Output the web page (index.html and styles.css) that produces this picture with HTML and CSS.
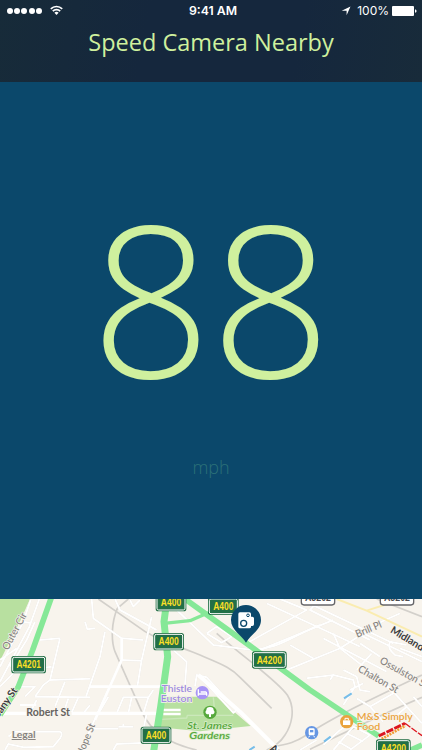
FILE: index.html
```html
<!doctype html>
<html lang="en">
  <head>
    <meta charset="UTF-8" />
    <meta name="viewport" content="width=device-width, initial-scale=1.0" />
    <title>Speed Camera Nearby</title>
    <link rel="stylesheet" href="styles.css">
  </head>
  <body>
    <div class="app">
      <header class="header">
        <div class="status-bar">
          <div class="status-left">
            <div class="signal"><i></i><i></i><i></i><i></i><i></i></div>
            <svg class="wifi" width="13" height="11" viewBox="0 0 13 11">
              <path d="M.8 3.9a8 8 0 0 1 11.4 0M2.8 6.1a5.2 5.2 0 0 1 7.4 0" fill="none" stroke="#fff" stroke-width="1.7" />
              <path d="M4.4 7.8a3 3 0 0 1 4.2 0L6.5 10z" fill="#fff" />
            </svg>
          </div>
          <div class="time">9:41 AM</div>
          <div class="status-right">
            <svg width="10" height="10" viewBox="0 0 10 10"><path d="M9.5 .5L5.6 9.2V4.8H.7z" fill="#fff" /></svg>
            <span class="percent">100%</span>
            <svg width="25" height="10" viewBox="0 0 25 10">
              <rect width="22" height="10" rx="1" fill="#fff" />
              <path d="M23 3.2q1.6.4 1.6 1.8T23 6.8z" fill="#fff" />
            </svg>
          </div>
        </div>
        <h1>Speed Camera Nearby</h1>
      </header>

      <main class="speed">
        <div class="value">88</div>
        <div class="unit">mph</div>
      </main>

      <svg class="map" viewBox="0 27 1266 453">
        <defs>
          <g id="shield">
            <rect x="-46" y="-26" width="92" height="52" rx="8" fill="#1f6b42" />
            <rect x="-42" y="-22" width="84" height="44" rx="5" fill="#226f47" stroke="#fff" stroke-width="3" />
          </g>
          <g id="shield-wide">
            <rect x="-52" y="-26" width="104" height="52" rx="8" fill="#1f6b42" />
            <rect x="-48" y="-22" width="96" height="44" rx="5" fill="#226f47" stroke="#fff" stroke-width="3" />
          </g>
        </defs>

        <!-- parks -->
        <path class="park" d="M0 27H90L62 90L0 212z" />
        <path class="park" d="M488 320H650L752 408L600 424L476 412z" />
        <path class="park-path" d="M484 388L560 384L562 376H700M640 322L645 376" />

        <!-- railways -->
        <g class="rail">
          <path d="M352 55C335 95 332 150 345 185C370 240 400 310 425 365C455 430 520 465 590 480" />
          <path d="M295 27L400 100C470 155 530 165 600 195C660 222 690 230 720 262L815 355" />
          <path d="M352 55L385 27" />
          <path d="M650 130C740 210 830 270 862 315C890 360 872 410 855 435C840 460 820 470 800 480" />
          <path d="M1266 255C1150 310 1000 380 920 435C880 460 860 462 830 468" />
          <path d="M1266 322C1130 380 1030 430 930 478" />
          <path d="M1130 27L1266 80" />
        </g>

        <!-- minor streets -->
        <g class="street thin">
          <path d="M92 30L70 95L0 230M118 27L88 110L0 275M70 95L95 100M0 210L50 175M105 95L80 150L30 230M0 290L45 245" />
          <path d="M120 150L180 145M180 145L150 270M118 235L155 230M75 320L105 290H60M105 320L130 285L150 270L270 266" />
          <path d="M105 320L270 322M195 275L165 350M205 325L190 370M60 345H110M110 330L90 368M235 322L215 368" />
          <path d="M255 95L262 118L285 115M275 27L280 85L365 145V210L270 420L245 480M315 125L300 200L258 320" />
          <path d="M345 27L360 60L470 120M365 145L430 150M365 210L425 212M390 30L400 50L420 30" />
          <path d="M455 80L425 210L412 290M350 370L370 322H445L430 370M395 322L385 370M445 322L460 300" />
          <path d="M270 345L250 370M325 320L290 380M355 410H400M370 402V412M282 416H355M440 372L425 440" />
          <path d="M25 440L45 425H180Q190 430 180 445L160 470L70 472L25 462L15 480M340 480L350 462L440 458" />
          <path d="M520 180L560 215L555 285M505 65L520 50L640 165L740 178C830 185 880 135 960 105" />
          <path d="M620 130L650 110L695 140L665 158L620 130M585 290L590 255L620 262L710 360L700 368L600 260" />
          <path d="M740 160L920 60L840 27M780 180L1000 90M800 40L1080 170M900 27L1180 160M960 27L930 60L1110 150" />
          <path d="M860 240L1020 175L1145 95L1200 70M1020 175L1130 260L1175 300L1220 350L1266 400" />
          <path d="M970 145L1160 245M1080 160L1140 200M1000 130L1020 175M940 205L870 165M1115 190L1070 240M1090 130L1266 215" />
          <path d="M920 265L1000 255L1060 270L1065 290L1030 345M1000 255L990 270M1030 240L1070 260L1080 300L1110 305M1050 300L1090 280" />
          <path d="M1170 155Q1160 175 1185 195L1210 200M1170 155L1220 165M1200 175L1266 200M1240 320L1266 350" />
          <path d="M1070 325L1110 350L1180 310L1160 290M1110 350L1150 395M1000 480L1060 410L1110 435L1050 480M1040 430L1090 455M1015 455L1055 478" />
          <path d="M970 465L1020 420L1050 400M900 480L950 450M1220 350L1180 385" />
        </g>
        <g class="street">
          <path d="M0 370H160M215 370H480" />
          <path d="M270 290H480M365 145V210L285 390" stroke-width="8" />
          <path d="M490 360H542M490 372H542" stroke-width="7" />
          <path d="M595 255L720 365L835 480" stroke-width="12" />
        </g>
        <path class="yellow" d="M1010 27L1100 62L1266 140M1100 62L1200 30" />

        <!-- main roads -->
        <g class="main">
          <path d="M155 20L98 180L55 290L0 375" />
          <path d="M502 20L492 95L503 200L482 350L460 490" stroke-width="21" />
          <path d="M492 100L570 92L625 68" stroke-width="10" />
          <path d="M555 27L740 160L930 300L1136 438" />
          <path d="M1210 490L1266 465" />
        </g>
        <path d="M1136 438L1215 400" stroke="#dc1720" stroke-width="9" stroke-dasharray="22 4" />
        <path d="M1215 400L1266 437" stroke="#dc1720" stroke-width="4" stroke-dasharray="20 4" />
        <path d="M1145 447L1216 407" stroke="#f19b34" stroke-width="8" stroke-dasharray="6 3" />
        <path d="M1032 325L1055 310M972 455L992 440M748 480L764 470" stroke="#76bde9" stroke-width="6" />

        <!-- street names -->
        <g class="label">
          <text transform="translate(24 182) rotate(-62)" textLength="122" lengthAdjust="spacingAndGlyphs">Outer Cir</text>
          <text class="dark" transform="translate(-22 410) rotate(-55)" textLength="132" lengthAdjust="spacingAndGlyphs">Albany St</text>
          <text class="strong" x="79" y="378" textLength="131" lengthAdjust="spacingAndGlyphs">Robert St</text>
          <text transform="translate(248 500) rotate(-68)" textLength="102" lengthAdjust="spacingAndGlyphs">Hope St</text>
          <text transform="translate(1072 143) rotate(-23)" textLength="82" lengthAdjust="spacingAndGlyphs">Brill Pl</text>
          <text class="dark" transform="translate(1169 126) rotate(31)" textLength="155" lengthAdjust="spacingAndGlyphs">Midland Rd</text>
          <text transform="translate(1137 218) rotate(29)" textLength="160" lengthAdjust="spacingAndGlyphs">Ossulston St</text>
          <text transform="translate(1072 243) rotate(30)" textLength="134" lengthAdjust="spacingAndGlyphs">Chalton St</text>
          <text class="dark" transform="translate(808 480) rotate(31)">Ampton</text>
          <text class="legal" x="35" y="444" textLength="72" lengthAdjust="spacingAndGlyphs">Legal</text>
        </g>

        <!-- places -->
        <g class="place">
          <g fill="#9d8be0">
            <text x="485" y="305" textLength="91" lengthAdjust="spacingAndGlyphs">Thistle</text>
            <text x="482" y="335" textLength="95" lengthAdjust="spacingAndGlyphs">Euston</text>
            <circle cx="607" cy="308" r="20" fill="#a894f5" />
          </g>
          <path d="M595 298V317M595 312H620V317M602 306H617Q620 306 620 312" fill="none" stroke="#fff" stroke-width="4" />
          <g class="garden" fill="#56a83c">
            <text x="561" y="417" textLength="136" lengthAdjust="spacingAndGlyphs">St. James</text>
            <text x="568" y="448" textLength="122" lengthAdjust="spacingAndGlyphs">Gardens</text>
            <circle cx="630" cy="367" r="20" />
          </g>
          <path d="M627 381V373H621A7 7 0 0 1 619 361A11 10 0 0 1 641 361A7 7 0 0 1 639 373H633V381z" fill="#fff" />
          <g fill="#eaa33d">
            <text x="1070" y="390" textLength="168" lengthAdjust="spacingAndGlyphs">M&amp;S Simply</text>
            <text x="1070" y="419" textLength="71" lengthAdjust="spacingAndGlyphs">Food</text>
            <circle cx="1040" cy="395" r="20" />
          </g>
          <path d="M1029 391H1051V405H1029z" fill="#fff" />
          <path d="M1035 391V385H1045V391" fill="none" stroke="#fff" stroke-width="3" />
          <circle cx="935" cy="428" r="20" fill="#6696e3" />
          <rect x="926" y="415" width="18" height="21" rx="4" fill="#fff" />
          <path d="M930 420H940V427H930z" fill="#6696e3" />
          <path d="M929 437L926 442M941 437L944 442" stroke="#fff" stroke-width="3" />
        </g>

        <!-- road numbers -->
        <g class="white-shield">
          <rect x="904" y="0" width="100" height="45" rx="8" />
          <rect x="1141" y="0" width="100" height="45" rx="8" />
          <text x="954" y="34" textLength="78" lengthAdjust="spacingAndGlyphs">A5202</text>
          <text x="1191" y="34" textLength="78" lengthAdjust="spacingAndGlyphs">A5202</text>
        </g>
        <g class="shields">
          <use href="#shield-wide" x="86" y="224" />
          <use href="#shield" x="513" y="38" />
          <use href="#shield" x="670" y="49" />
          <use href="#shield" x="506" y="155" />
          <use href="#shield" x="468" y="436" />
          <use href="#shield-wide" x="808" y="210" />
          <use href="#shield-wide" x="1180" y="474" />
          <text x="86" y="235" textLength="73" lengthAdjust="spacingAndGlyphs">A4201</text>
          <text x="513" y="49" textLength="61" lengthAdjust="spacingAndGlyphs">A400</text>
          <text x="670" y="60" textLength="61" lengthAdjust="spacingAndGlyphs">A400</text>
          <text x="506" y="166" textLength="61" lengthAdjust="spacingAndGlyphs">A400</text>
          <text x="468" y="447" textLength="61" lengthAdjust="spacingAndGlyphs">A400</text>
          <text x="808" y="221" textLength="76" lengthAdjust="spacingAndGlyphs">A4200</text>
          <text x="1180" y="485" textLength="76" lengthAdjust="spacingAndGlyphs">A4200</text>
        </g>

        <!-- camera pin -->
        <path d="M738 158C726 136 693 121 693 90A45 45 0 0 1 783 90C783 121 750 136 738 158z" fill="#0b486b" />
        <path d="M720 67H748Q753 67 753 72V80H757Q762 80 762 85V103Q762 108 757 108H753V110Q753 115 748 115H720Q715 115 715 110V72Q715 67 720 67z" fill="#fff" />
        <circle cx="731" cy="100" r="9" fill="#fff" stroke="#0b486b" stroke-width="4" />
        <circle cx="744" cy="76" r="4" fill="#fff" stroke="#0b486b" stroke-width="3" />
      </svg>
    </div>
  </body>
</html>
```
FILE: styles.css
```css
* {
  box-sizing: border-box;
}
body {
  margin: 0;
  font-family: "Open Sans", sans-serif;
  background: #0b486b;
}
.app {
  width: 422px;
  height: 750px;
  display: flex;
  flex-direction: column;
  overflow: hidden;
}

/* Header */
.header {
  height: 82px;
  background: linear-gradient(100deg, #172b39, #15273d 35%, #15273d 70%, #182b3a);
  color: #cff09e;
}
.status-bar {
  height: 21px;
  padding: 0 5px 0 7px;
  display: grid;
  grid-template-columns: 1fr auto 1fr;
  align-items: center;
  color: #fff;
  font-family: Inter, sans-serif;
  font-size: 12px;
}
.status-left,
.status-right {
  display: flex;
  align-items: center;
}
.status-left {
  gap: 8px;
}
.status-right {
  justify-content: flex-end;
}
.signal {
  display: flex;
  gap: 1.2px;
}
.signal i {
  width: 6px;
  height: 6px;
  border-radius: 50%;
  background: #fff;
}
.time {
  padding-left: 2px;
  font-size: 12.3px;
  font-weight: 600;
}
.percent {
  margin: 0 3px 0 6px;
}
h1 {
  margin: 0;
  font-size: 23.5px;
  font-weight: 400;
  line-height: 42px;
  text-align: center;
}

/* Speed readout */
.speed {
  height: 517px;
  padding-top: 72px;
  background: #0b486b;
  text-align: center;
  font-weight: 300;
}
.value {
  color: #cff09e;
  font-size: 210px;
  line-height: 286px;
}
.unit {
  margin-top: 14px;
  color: #2b7178;
  font-size: 18px;
  line-height: 26px;
}

/* Map */
.map {
  display: block;
  width: 422px;
  height: 151px;
  background: #f8f4ed;
  font-family: Lato, sans-serif;
}
.map path {
  stroke-linejoin: round;
}
.park {
  fill: #b8e0a0;
}
.park-path {
  fill: none;
  stroke: #cbe8ba;
  stroke-width: 4;
}
.rail {
  fill: none;
  stroke: #d3d0cb;
  stroke-width: 5;
}
.street {
  fill: none;
  stroke: #fff;
  stroke-width: 10;
}
.street.thin {
  stroke-width: 6;
  filter: drop-shadow(0 0 1px #ddd8d0);
}
.yellow {
  fill: none;
  stroke: #faecb0;
  stroke-width: 6;
}
.main {
  fill: none;
  stroke: #86e897;
  stroke-width: 17;
}
.label text {
  fill: #85827f;
  font-size: 31px;
  font-weight: 500;
  paint-order: stroke;
  stroke: #f8f4ed;
  stroke-width: 4px;
}
.label .strong {
  fill: #66635f;
  font-weight: 700;
}
.label .dark {
  fill: #3d3d3d;
  font-weight: 700;
}
.label .legal {
  font-size: 29px;
  font-weight: 700;
  text-decoration: underline;
}
.place text {
  font-size: 31px;
  font-weight: 600;
  paint-order: stroke;
  stroke: #f8f4ed;
  stroke-width: 4px;
}
.place .garden text {
  font-style: italic;
  stroke: #d9ecc9;
}
.shields text,
.white-shield text {
  font-family: "Liberation Sans", sans-serif;
  font-size: 34px;
  font-weight: 700;
  text-anchor: middle;
}
.shields text {
  fill: #fbdf26;
}
.white-shield rect {
  fill: #fff;
  stroke: #66666a;
  stroke-width: 4;
}
.white-shield text {
  fill: #4b4b50;
}
```
